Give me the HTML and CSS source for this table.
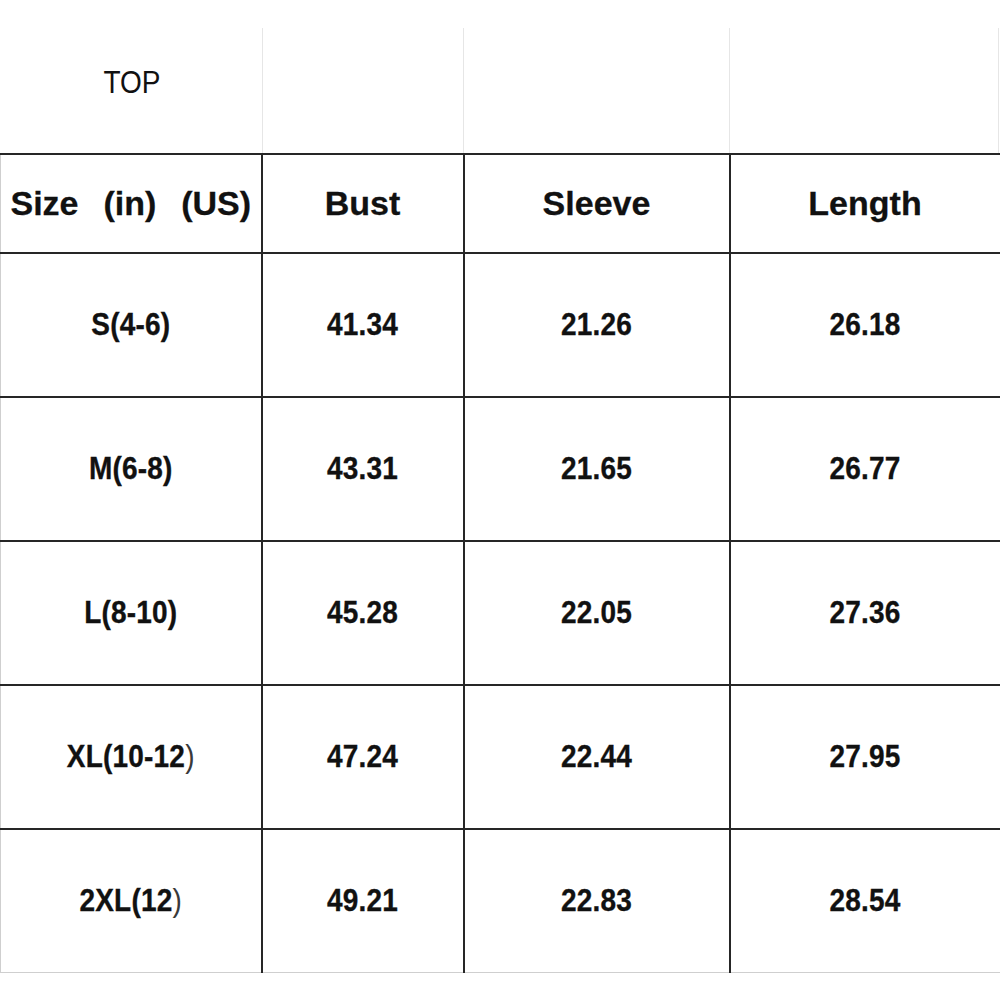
FILE: index.html
```html
<!DOCTYPE html>
<html>
<head>
<meta charset="utf-8">
<link rel="stylesheet" href="styles.css">
</head>
<body>
<div class="sheet">
  <div class="caption-row">
    <div class="cap-cell"><span class="cap-title">TOP</span></div>
    <div class="cap-cell"></div>
    <div class="cap-cell"></div>
    <div class="cap-cell"></div>
  </div>
  <table class="chart">
    <colgroup>
      <col class="c1"><col class="c2"><col class="c3"><col class="c4">
    </colgroup>
    <thead>
      <tr>
        <th class="size-head">Size  (in)  (US)</th>
        <th>Bust</th>
        <th>Sleeve</th>
        <th>Length</th>
      </tr>
    </thead>
    <tbody>
      <tr>
        <td><span class="val">S(4-6)</span></td>
        <td><span class="val">41.34</span></td>
        <td><span class="val">21.26</span></td>
        <td><span class="val">26.18</span></td>
      </tr>
      <tr>
        <td><span class="val">M(6-8)</span></td>
        <td><span class="val">43.31</span></td>
        <td><span class="val">21.65</span></td>
        <td><span class="val">26.77</span></td>
      </tr>
      <tr>
        <td><span class="val">L(8-10)</span></td>
        <td><span class="val">45.28</span></td>
        <td><span class="val">22.05</span></td>
        <td><span class="val">27.36</span></td>
      </tr>
      <tr>
        <td><span class="val">XL(10-12<span class="thin-paren">)</span></span></td>
        <td><span class="val">47.24</span></td>
        <td><span class="val">22.44</span></td>
        <td><span class="val">27.95</span></td>
      </tr>
      <tr class="last">
        <td><span class="val">2XL(12<span class="thin-paren">)</span></span></td>
        <td><span class="val">49.21</span></td>
        <td><span class="val">22.83</span></td>
        <td><span class="val">28.54</span></td>
      </tr>
    </tbody>
  </table>
</div>
</body>
</html>
```
FILE: styles.css
```css
html, body {
  margin: 0;
  padding: 0;
  background: #ffffff;
}

.sheet {
  width: 1000px;
  font-family: "Liberation Sans", Arial, sans-serif;
  color: #111111;
}

.caption-row {
  display: grid;
  grid-template-columns: 263px 201px 266px 269px;
  height: 153px;
  padding-top: 28px;
  box-sizing: border-box;
}

.cap-cell {
  border-right: 1px solid #e6e6e6;
  display: flex;
  justify-content: center;
  align-items: flex-start;
}

.cap-title {
  font-size: 28px;
  line-height: 32px;
  padding-top: 37px;
  padding-left: 2px;
  transform: scaleY(1.1);
}

.chart {
  border-collapse: collapse;
  table-layout: fixed;
  width: 1000px;
}

.c1 { width: 261px; }
.c2 { width: 202px; }
.c3 { width: 266px; }
.c4 { width: 271px; }

.chart th,
.chart td {
  border: 2px solid #262626;
  text-align: center;
  vertical-align: middle;
  padding: 0;
  -webkit-text-stroke: 0.3px #111111;
}

.chart th:first-child,
.chart td:first-child {
  border-left: 1px solid #cfcfcf;
}

.chart th {
  height: 97px;
  font-size: 34px;
  font-weight: bold;
}

.size-head {
  white-space: pre;
  word-spacing: 3px;
}

.chart td {
  height: 142px;
  font-size: 28px;
  font-weight: bold;
}

.chart .last td {
  border-bottom: 1px solid #cfcfcf;
}

.val {
  display: inline-block;
  transform: scaleY(1.13);
  letter-spacing: 0.2px;
}

.thin-paren {
  font-weight: normal;
  color: #3a3a3a;
  -webkit-text-stroke: 0;
}
```
